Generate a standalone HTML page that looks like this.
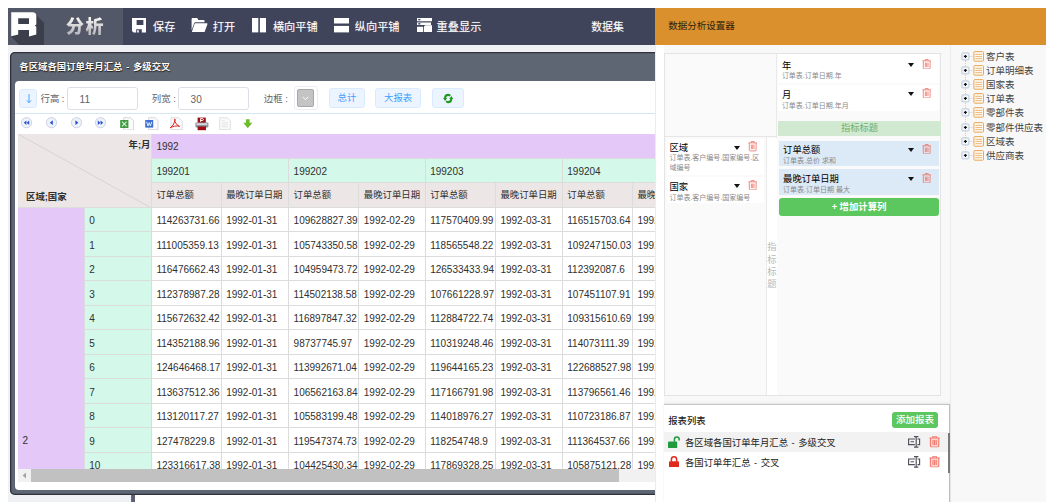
<!DOCTYPE html>
<html lang="zh-CN">
<head>
<meta charset="utf-8">
<title>分析</title>
<style>
html,body{margin:0;padding:0;background:#fff;}
body{width:1054px;height:502px;position:relative;overflow:hidden;font-family:"Liberation Sans","Noto Sans CJK SC",sans-serif;font-size:9.4px;color:#222;}
.abs{position:absolute;}
#bg{left:8px;top:8px;width:1038px;height:494px;background:#f0f1f5;}
/* top bar */
#logo{left:8px;top:8px;width:114.8px;height:36.7px;background:#535868;overflow:hidden;}
#tbar{left:122.8px;top:8px;width:532.8px;height:36.7px;background:#40445a;}
.ti{position:absolute;top:0;height:36.7px;line-height:38px;color:#fff;font-size:11.2px;white-space:nowrap;text-shadow:0 0 1px rgba(255,255,255,.35);}
.ti svg{position:absolute;}
#fx{left:58px;top:5.6px;font-size:18px;font-weight:900;line-height:23px;letter-spacing:1.5px;font-family:"Noto Sans CJK SC","Liberation Sans",sans-serif;color:#d4d4d4;background:linear-gradient(#f4f4f4 20%,#b9bcc4 80%);-webkit-background-clip:text;background-clip:text;-webkit-text-fill-color:transparent;filter:drop-shadow(0.6px 0.8px 0 rgba(150,120,110,.8));}
/* window */
#win2{left:132px;top:300px;width:640px;height:260px;background:#fff;border:3.6px solid #5b6170;box-sizing:border-box;border-radius:5px;box-shadow:0 0 0 .7px #2c2f3a;}
#win{left:10px;top:51.8px;width:700px;height:443px;background:#5f6673;border-radius:5px;box-shadow:inset 0 0 0 1.3px #2f323c;overflow:hidden;}
#wtitle{left:9.3px;top:7.1px;font-size:9.4px;font-weight:700;color:#fff;line-height:15px;white-space:nowrap;text-shadow:0 0 1px rgba(20,20,20,.9),0.5px 0.5px 1px #222;font-family:"Noto Sans CJK SC","Liberation Sans",sans-serif;letter-spacing:0;word-spacing:1.4px;}
#wbody{left:5px;top:29.2px;width:700px;height:409.2px;background:#fff;border-radius:4px 0 0 4px;overflow:hidden;}
#wb2{left:-.8px;top:0;width:700px;height:409.2px;}
/* controls inside window body; coords relative to wbody (page x-14.2, page y-81) */
.lbl{position:absolute;font-size:9.4px;color:#606266;line-height:14px;white-space:nowrap;top:11.2px;}
.inp{position:absolute;top:6.4px;height:22.6px;box-sizing:border-box;border:1px solid #dcdfe6;border-radius:3px;background:#fff;font-size:10px;color:#606266;line-height:23.4px;padding-left:11.2px;overflow:hidden;}
.btn{position:absolute;top:7px;height:20.3px;box-sizing:border-box;border:1px solid #d9ecff;background:#ecf5ff;border-radius:3px;color:#409eff;font-size:9.4px;line-height:18.3px;text-align:center;white-space:nowrap;}
#sep{left:0;top:32px;width:700px;height:1px;background:#d3e8f3;}
.ic{position:absolute;top:36px;}
/* table */
#tbl{left:3.8px;top:52.6px;width:690px;height:335.2px;overflow:hidden;font-size:10px;color:#303030;}
.c{position:absolute;box-sizing:border-box;border-right:1px solid #dcdcdc;border-bottom:1px solid #dcdcdc;padding-left:4.6px;white-space:nowrap;overflow:hidden;background:#fff;}
.c.hd{background:#ece6e6;}
.c.pu{background:#e4c8f7;}
.c.gr{background:#d4f9ea;}
.c.zh{font-size:9.4px;}
.c.n{padding-top:1.3px;}
.corner{padding:0;font-weight:bold;font-size:9.4px;}
.corner span{position:absolute;line-height:12px;}
.corner .ym{right:0.4px;top:5.5px;}
.corner .rc{left:8px;top:57px;}
/* scrollbar */
#sb{left:3.8px;top:387.8px;width:700px;height:13.4px;background:#f1f1f1;}
#sbt{left:13.2px;top:0;width:588px;height:13.4px;background:#c1c1c1;}
/* right panel */
#panel{left:655px;top:8px;width:391px;height:494px;background:#f8f8f8;overflow:hidden;}
#pin{left:.6px;top:0;width:390.4px;height:494px;}
#phead{left:-1px;top:0;width:391.4px;height:36.7px;background:#d9902d;color:#2b2210;font-size:9.5px;line-height:36.5px;}
#pwhite{left:-.6px;top:36.7px;width:9px;height:460px;background:#fff;box-sizing:border-box;border-left:1px solid #ececec;}
#box{left:8.9px;top:45px;width:277px;height:342.6px;box-sizing:border-box;border:1px solid #e4e4e4;background:#fafafa;}
.vl{position:absolute;width:1px;background:#eaeaea;}
.hl{position:absolute;height:1px;background:#e6e6e6;}
.it{position:absolute;background:#fff;box-sizing:border-box;}
.it b{position:absolute;left:3.6px;top:3.4px;font-size:9.3px;line-height:12px;font-weight:400;color:#000;white-space:nowrap;font-family:"Noto Sans CJK SC","Liberation Sans",sans-serif;}
.it i{position:absolute;left:3.6px;font-style:normal;font-size:7px;line-height:9.4px;color:#8a8a8a;}
.it.bl{background:#dce9f7;}
.tri{position:absolute;width:0;height:0;border-left:3.3px solid transparent;border-right:3.3px solid transparent;border-top:4.2px solid #111;}
.trash{position:absolute;}
.gbtn{position:absolute;background:#5cc75f;color:#fff;border-radius:3px;text-align:center;font-weight:bold;white-space:nowrap;font-family:"Noto Sans CJK SC","Liberation Sans",sans-serif;}
/* tree */
.tr{position:absolute;left:305px;height:14px;white-space:nowrap;font-size:9.5px;line-height:14px;color:#444;font-weight:400;font-family:'Noto Sans CJK SC','Liberation Sans',sans-serif;}
.tr svg{position:absolute;top:1px;left:0;}
.tr span{position:absolute;left:25.4px;top:-0.9px;}
/* report list */
#rl{left:8.4px;top:396.4px;width:286.2px;height:100px;background:#fff;border-top:1px solid #c4c4c4;border-right:1px solid #bdbdbd;box-sizing:border-box;box-shadow:0 -1px 2px rgba(0,0,0,.08);}
.rrow{position:absolute;left:0;width:284.5px;height:19.6px;font-size:9.4px;line-height:21.2px;color:#222;white-space:nowrap;word-spacing:.9px;}
.rrow span{position:absolute;left:20.9px;top:0;}
</style>
</head>
<body>
<div id="bg" class="abs"></div>

<!-- logo section -->
<div id="logo" class="abs">
  <svg class="abs" style="left:0;top:0" width="115" height="37" viewBox="0 0 115 37">
    <polygon points="28.3,7 36,14.7 36,37 11.2,37 3.2,28.6 3.2,6" fill="#3b3f4b"/>
    <path fill="#fff" fill-rule="evenodd" d="M3.2 4.2 H24.6 Q28.3 4.2 28.3 7.8 V16.4 L26.8 17.6 L28.3 18.8 V26.6 L21 28.6 V22 H10.2 V26.4 L3.2 28.3 Z M10.2 10.2 V16 H21 V10.2 Z"/>
  </svg>
  <div id="fx" class="abs">分析</div>
</div>

<!-- toolbar -->
<div id="tbar" class="abs">
  <div class="ti" style="left:9.3px;width:60px">
    <svg style="left:0;top:10px" width="14.4" height="14.6" viewBox="0 0 14.4 14.6"><path fill="#fff" fill-rule="evenodd" d="M0 0H14.4V14.6H9.8V11.2H4.2V14.6H1.6L0 13Z M4.6 2V7H11.4V2Z M5.2 12.2H6.8V14.6H5.2Z"/></svg>
    <span style="position:absolute;left:21px">保存</span>
  </div>
  <div class="ti" style="left:68.4px;width:60px">
    <svg style="left:0;top:10.2px" width="16.6" height="14.2" viewBox="0 0 16.6 14.2"><path fill="#fff" d="M0.6 1.2Q0.6 0 1.8 0H5.6Q6.6 0 6.9 1L7.2 1.9H12.4Q13.6 1.9 13.6 3.1V4.3H4.6Q3.4 4.3 3 5.4L0.6 12.2Z"/><path fill="#fff" d="M4.3 5.3H16Q16.8 5.3 16.5 6.1L13.9 13.3Q13.6 14.2 12.6 14.2H1.4Q0.7 14.2 1 13.4L3.4 6.2Q3.7 5.3 4.3 5.3Z"/></svg>
    <span style="position:absolute;left:21.6px">打开</span>
  </div>
  <div class="ti" style="left:129.5px;width:80px">
    <svg style="left:0;top:10.3px" width="14.2" height="14.4" viewBox="0 0 14.2 14.4"><rect x="0" y="0" width="6.3" height="14.4" fill="#fff"/><rect x="7.9" y="0" width="6.3" height="14.4" fill="#fff"/></svg>
    <span style="position:absolute;left:20.6px">横向平铺</span>
  </div>
  <div class="ti" style="left:211px;width:80px">
    <svg style="left:0;top:10.3px" width="15" height="14.4" viewBox="0 0 15 14.4"><rect x="0" y="0" width="15" height="5.5" fill="#fff"/><rect x="0" y="7.9" width="15" height="6.5" fill="#fff"/></svg>
    <span style="position:absolute;left:21px">纵向平铺</span>
  </div>
  <div class="ti" style="left:293.6px;width:80px">
    <svg style="left:.5px;top:10px" width="15.4" height="14" viewBox="0 0 15.4 14"><path fill="#fff" d="M0 0H15.4V3.2H0Z M0 4.5H14V7.1H0Z M0 8.8H6V14H0Z M6.8 14V9.4Q6.8 7.3 9 7.3H15.4V14Z"/><rect x="1.3" y="0.9" width="2.1" height="1.4" fill="#40445a"/><rect x="1.3" y="5.1" width="2.1" height="1.4" fill="#40445a"/></svg>
    <span style="position:absolute;left:20.2px">重叠显示</span>
  </div>
  <div class="ti" style="left:468.4px;font-size:10.9px">数据集</div>
</div>

<!-- second window peeking below -->
<div id="win2" class="abs"></div>

<!-- main window -->
<div id="win" class="abs">
  <div id="wtitle" class="abs">各区域各国订单年月汇总 - 多级交叉</div>
  <div id="wbody" class="abs"><div id="wb2" class="abs">
    <!-- toolbar row -->
    <div class="btn" style="left:4.8px;top:8.3px;width:18.2px;height:18.6px;line-height:15px;"><svg width="6" height="10" viewBox="0 0 6 10" style="position:absolute;left:5.6px;top:3.8px"><path d="M3 0V8.6M0.9 6.4L3 8.8L5.1 6.4" stroke="#409eff" stroke-width="0.9" fill="none"/></svg></div>
    <div class="lbl" style="left:26.3px">行高 :</div>
    <div class="inp" style="left:53.2px;width:70.4px">11</div>
    <div class="lbl" style="left:137.6px">列宽 :</div>
    <div class="inp" style="left:164.2px;width:70.8px">30</div>
    <div class="lbl" style="left:249.6px">边框 :</div>
    <div class="abs" style="left:279.4px;top:4.8px;width:24.4px;height:24.6px;box-sizing:border-box;border:1px solid #ebeef5;border-radius:3px;background:#fff;"></div>
    <div class="abs" style="left:282.8px;top:8.4px;width:17.4px;height:17.2px;box-sizing:border-box;border:1px solid #a8a8a8;border-radius:2px;background:#c4c4c4;"><svg width="7" height="5" viewBox="0 0 7 5" style="position:absolute;left:4.2px;top:5.6px"><path d="M0.8 1L3.5 3.6L6.2 1" stroke="#fff" stroke-width="1" fill="none"/></svg></div>
    <div class="btn" style="left:314.7px;width:36.2px">总计</div>
    <div class="btn" style="left:360.8px;width:46.2px">大报表</div>
    <div class="btn" style="left:417.8px;width:31.8px"><svg width="10.4" height="13" viewBox="0 0 10 11.4" preserveAspectRatio="none" style="position:absolute;left:10px;top:2.6px"><path fill="#1e9b1e" d="M5 1.6A4 4 0 0 0 1 5.3H0L2 8L4 5.3H2.9A2.3 2.3 0 0 1 5 3.4A2.2 2.2 0 0 1 6.5 4L7.6 2.6A4 4 0 0 0 5 1.6Z M5 9.8A4 4 0 0 0 9 6.1H10L8 3.4L6 6.1H7.1A2.3 2.3 0 0 1 5 8A2.2 2.2 0 0 1 3.5 7.4L2.4 8.8A4 4 0 0 0 5 9.8Z"/></svg></div>
    <div id="sep" class="abs"></div>
    <!-- icon row -->
    <svg class="ic" style="left:6.8px" width="11" height="12" viewBox="0 0 11 12"><circle cx="5.5" cy="5.7" r="5.1" fill="#eef2fb" stroke="#c3c7dc" stroke-width=".8"/><path d="M5.4 3.5L2.8 5.7L5.4 7.9Z M8.2 3.5L5.6 5.7L8.2 7.9Z" fill="#2a4fd0"/></svg>
    <svg class="ic" style="left:31.5px" width="11" height="12" viewBox="0 0 11 12"><circle cx="5.5" cy="5.7" r="5.1" fill="#eef2fb" stroke="#c3c7dc" stroke-width=".8"/><path d="M6.8 3.3L3.8 5.7L6.8 8.1Z" fill="#2a4fd0"/></svg>
    <svg class="ic" style="left:56.3px" width="11" height="12" viewBox="0 0 11 12"><circle cx="5.5" cy="5.7" r="5.1" fill="#eef2fb" stroke="#c3c7dc" stroke-width=".8"/><path d="M4.4 3.3L7.4 5.7L4.4 8.1Z" fill="#2a4fd0"/></svg>
    <svg class="ic" style="left:81.2px" width="11" height="12" viewBox="0 0 11 12"><circle cx="5.5" cy="5.7" r="5.1" fill="#eef2fb" stroke="#c3c7dc" stroke-width=".8"/><path d="M2.8 3.5L5.4 5.7L2.8 7.9Z M5.6 3.5L8.2 5.7L5.6 7.9Z" fill="#2a4fd0"/></svg>
    <!-- excel -->
    <svg class="ic" style="left:105.4px" width="14" height="13.4" viewBox="0 0 14 13.4"><path d="M3.6 0.7H10.6L13.5 3.6V13H3.6Z" fill="#fbfbfb" stroke="#c9c9c9" stroke-width=".7"/><rect x="0.2" y="3" width="8.2" height="8" fill="#3f9a3f"/><path d="M2 4.6L6.6 9.4M6.6 4.6L2 9.4" stroke="#d8f0d8" stroke-width="1.1"/></svg>
    <!-- word -->
    <svg class="ic" style="left:130.8px" width="14" height="13.4" viewBox="0 0 14 13.4"><path d="M3.6 0.7H10.2L13 3.6V12.6H3.6Z" fill="#fbfbfb" stroke="#c9c9d4" stroke-width=".7"/><rect x="0.2" y="3" width="8" height="7.6" fill="#3f6fd0"/><path d="M1.6 4.8L3 9L4.2 5.6L5.4 9L6.8 4.8" stroke="#dfe8fb" stroke-width="1" fill="none"/></svg>
    <!-- pdf -->
    <svg class="ic" style="left:156.2px" width="13" height="13.4" viewBox="0 0 13 13.4"><path d="M1 0.7H8.6L12.2 4.2V12.6H1Z" fill="#fbfbfb" stroke="#cfcfd6" stroke-width=".7"/><path d="M0.2 10.8Q3.6 9 5.2 3.2Q5.4 2 4.8 2Q4.2 2.4 4.8 4.4Q6 8 9.6 9.4Q8 8.6 4.4 9.2Q2 9.8 0.2 10.8Z" fill="none" stroke="#e02424" stroke-width="1"/></svg>
    <!-- print -->
    <svg class="ic" style="left:180.6px" width="14" height="13.6" viewBox="0 0 14 13.6"><rect x="2.6" y="0.6" width="8.2" height="5.4" fill="#9c0f14"/><rect x="0.4" y="5.4" width="13" height="5" rx="1" fill="#8f949e"/><rect x="1.6" y="6.4" width="10.6" height="1.4" fill="#e8e8ee"/><rect x="2.6" y="9.4" width="8.4" height="3.8" fill="#9c0f14"/><path d="M5.6 4.8V1.6H7.4Q8.4 1.6 8.4 2.6Q8.4 3.5 7.4 3.5H5.8" fill="none" stroke="#fff" stroke-width="1"/></svg>
    <!-- page gray -->
    <svg class="ic" style="left:205px" width="12" height="13.4" viewBox="0 0 12 13.4"><path d="M0.6 0.7H8L11.4 4V12.6H0.6Z" fill="#fafafa" stroke="#d6d6d6" stroke-width=".7"/><path d="M2.6 3.6H6 M2.6 5.8H9 M2.6 7.8H9 M2.6 9.8H9" stroke="#e0e0e0" stroke-width=".8"/></svg>
    <!-- green arrow -->
    <svg class="ic" style="left:228.8px;top:37.6px" width="9.6" height="9.6" viewBox="0 0 9.6 9.6"><path d="M3 0.2H6.6V3.8H9.4L4.8 9.2L0.2 3.8H3Z" fill="#6cbc2c"/></svg>

    <!-- table -->
    <div id="tbl" class="abs">
<div class="c hd corner" style="left:0;top:0;width:133.8px;height:74.2px"><svg width="133.8" height="74.2" style="position:absolute;left:0;top:0"><line x1="0" y1="0" x2="133.8" y2="74.2" stroke="#d9d3d3" stroke-width="1"/></svg><span class="ym">年;月</span><span class="rc">区域;国家</span></div>
<div class="c pu n" style="left:133.8px;top:0.0px;width:548.1px;height:25.1px;line-height:24.1px">1992</div>
<div class="c gr n" style="left:133.8px;top:25.1px;width:137.2px;height:24.3px;line-height:23.3px">199201</div>
<div class="c hd zh" style="left:133.8px;top:49.4px;width:69.8px;height:24.8px;line-height:23.8px">订单总额</div>
<div class="c hd zh" style="left:203.6px;top:49.4px;width:67.4px;height:24.8px;line-height:23.8px">最晚订单日期</div>
<div class="c gr n" style="left:271.0px;top:25.1px;width:136.6px;height:24.3px;line-height:23.3px">199202</div>
<div class="c hd zh" style="left:271.0px;top:49.4px;width:70.2px;height:24.8px;line-height:23.8px">订单总额</div>
<div class="c hd zh" style="left:341.2px;top:49.4px;width:66.4px;height:24.8px;line-height:23.8px">最晚订单日期</div>
<div class="c gr n" style="left:407.6px;top:25.1px;width:137.1px;height:24.3px;line-height:23.3px">199203</div>
<div class="c hd zh" style="left:407.6px;top:49.4px;width:70.2px;height:24.8px;line-height:23.8px">订单总额</div>
<div class="c hd zh" style="left:477.8px;top:49.4px;width:66.9px;height:24.8px;line-height:23.8px">最晚订单日期</div>
<div class="c gr n" style="left:544.7px;top:25.1px;width:137.2px;height:24.3px;line-height:23.3px">199204</div>
<div class="c hd zh" style="left:544.7px;top:49.4px;width:70.2px;height:24.8px;line-height:23.8px">订单总额</div>
<div class="c hd zh" style="left:614.9px;top:49.4px;width:67.0px;height:24.8px;line-height:23.8px">最晚订单日期</div>
<div class="c pu n" style="left:0;top:74.2px;width:66.6px;height:465.5px;line-height:464.5px">2</div>
<div class="c gr n" style="left:66.6px;top:74.2px;width:67.2px;height:24.5px;line-height:23.5px">0</div>
<div class="c d n" style="left:133.8px;top:74.2px;width:69.8px;height:24.5px;line-height:23.5px">114263731.66</div>
<div class="c d n" style="left:203.6px;top:74.2px;width:67.4px;height:24.5px;line-height:23.5px">1992-01-31</div>
<div class="c d n" style="left:271.0px;top:74.2px;width:70.2px;height:24.5px;line-height:23.5px">109628827.39</div>
<div class="c d n" style="left:341.2px;top:74.2px;width:66.4px;height:24.5px;line-height:23.5px">1992-02-29</div>
<div class="c d n" style="left:407.6px;top:74.2px;width:70.2px;height:24.5px;line-height:23.5px">117570409.99</div>
<div class="c d n" style="left:477.8px;top:74.2px;width:66.9px;height:24.5px;line-height:23.5px">1992-03-31</div>
<div class="c d n" style="left:544.7px;top:74.2px;width:70.2px;height:24.5px;line-height:23.5px">116515703.64</div>
<div class="c d n" style="left:614.9px;top:74.2px;width:67.0px;height:24.5px;line-height:23.5px">1992-04-30</div>
<div class="c gr n" style="left:66.6px;top:98.7px;width:67.2px;height:24.5px;line-height:23.5px">1</div>
<div class="c d n" style="left:133.8px;top:98.7px;width:69.8px;height:24.5px;line-height:23.5px">111005359.13</div>
<div class="c d n" style="left:203.6px;top:98.7px;width:67.4px;height:24.5px;line-height:23.5px">1992-01-31</div>
<div class="c d n" style="left:271.0px;top:98.7px;width:70.2px;height:24.5px;line-height:23.5px">105743350.58</div>
<div class="c d n" style="left:341.2px;top:98.7px;width:66.4px;height:24.5px;line-height:23.5px">1992-02-29</div>
<div class="c d n" style="left:407.6px;top:98.7px;width:70.2px;height:24.5px;line-height:23.5px">118565548.22</div>
<div class="c d n" style="left:477.8px;top:98.7px;width:66.9px;height:24.5px;line-height:23.5px">1992-03-31</div>
<div class="c d n" style="left:544.7px;top:98.7px;width:70.2px;height:24.5px;line-height:23.5px">109247150.03</div>
<div class="c d n" style="left:614.9px;top:98.7px;width:67.0px;height:24.5px;line-height:23.5px">1992-04-30</div>
<div class="c gr n" style="left:66.6px;top:123.2px;width:67.2px;height:24.5px;line-height:23.5px">2</div>
<div class="c d n" style="left:133.8px;top:123.2px;width:69.8px;height:24.5px;line-height:23.5px">116476662.43</div>
<div class="c d n" style="left:203.6px;top:123.2px;width:67.4px;height:24.5px;line-height:23.5px">1992-01-31</div>
<div class="c d n" style="left:271.0px;top:123.2px;width:70.2px;height:24.5px;line-height:23.5px">104959473.72</div>
<div class="c d n" style="left:341.2px;top:123.2px;width:66.4px;height:24.5px;line-height:23.5px">1992-02-29</div>
<div class="c d n" style="left:407.6px;top:123.2px;width:70.2px;height:24.5px;line-height:23.5px">126533433.94</div>
<div class="c d n" style="left:477.8px;top:123.2px;width:66.9px;height:24.5px;line-height:23.5px">1992-03-31</div>
<div class="c d n" style="left:544.7px;top:123.2px;width:70.2px;height:24.5px;line-height:23.5px">112392087.6</div>
<div class="c d n" style="left:614.9px;top:123.2px;width:67.0px;height:24.5px;line-height:23.5px">1992-04-30</div>
<div class="c gr n" style="left:66.6px;top:147.7px;width:67.2px;height:24.5px;line-height:23.5px">3</div>
<div class="c d n" style="left:133.8px;top:147.7px;width:69.8px;height:24.5px;line-height:23.5px">112378987.28</div>
<div class="c d n" style="left:203.6px;top:147.7px;width:67.4px;height:24.5px;line-height:23.5px">1992-01-31</div>
<div class="c d n" style="left:271.0px;top:147.7px;width:70.2px;height:24.5px;line-height:23.5px">114502138.58</div>
<div class="c d n" style="left:341.2px;top:147.7px;width:66.4px;height:24.5px;line-height:23.5px">1992-02-29</div>
<div class="c d n" style="left:407.6px;top:147.7px;width:70.2px;height:24.5px;line-height:23.5px">107661228.97</div>
<div class="c d n" style="left:477.8px;top:147.7px;width:66.9px;height:24.5px;line-height:23.5px">1992-03-31</div>
<div class="c d n" style="left:544.7px;top:147.7px;width:70.2px;height:24.5px;line-height:23.5px">107451107.91</div>
<div class="c d n" style="left:614.9px;top:147.7px;width:67.0px;height:24.5px;line-height:23.5px">1992-04-30</div>
<div class="c gr n" style="left:66.6px;top:172.2px;width:67.2px;height:24.5px;line-height:23.5px">4</div>
<div class="c d n" style="left:133.8px;top:172.2px;width:69.8px;height:24.5px;line-height:23.5px">115672632.42</div>
<div class="c d n" style="left:203.6px;top:172.2px;width:67.4px;height:24.5px;line-height:23.5px">1992-01-31</div>
<div class="c d n" style="left:271.0px;top:172.2px;width:70.2px;height:24.5px;line-height:23.5px">116897847.32</div>
<div class="c d n" style="left:341.2px;top:172.2px;width:66.4px;height:24.5px;line-height:23.5px">1992-02-29</div>
<div class="c d n" style="left:407.6px;top:172.2px;width:70.2px;height:24.5px;line-height:23.5px">112884722.74</div>
<div class="c d n" style="left:477.8px;top:172.2px;width:66.9px;height:24.5px;line-height:23.5px">1992-03-31</div>
<div class="c d n" style="left:544.7px;top:172.2px;width:70.2px;height:24.5px;line-height:23.5px">109315610.69</div>
<div class="c d n" style="left:614.9px;top:172.2px;width:67.0px;height:24.5px;line-height:23.5px">1992-04-30</div>
<div class="c gr n" style="left:66.6px;top:196.7px;width:67.2px;height:24.5px;line-height:23.5px">5</div>
<div class="c d n" style="left:133.8px;top:196.7px;width:69.8px;height:24.5px;line-height:23.5px">114352188.96</div>
<div class="c d n" style="left:203.6px;top:196.7px;width:67.4px;height:24.5px;line-height:23.5px">1992-01-31</div>
<div class="c d n" style="left:271.0px;top:196.7px;width:70.2px;height:24.5px;line-height:23.5px">98737745.97</div>
<div class="c d n" style="left:341.2px;top:196.7px;width:66.4px;height:24.5px;line-height:23.5px">1992-02-29</div>
<div class="c d n" style="left:407.6px;top:196.7px;width:70.2px;height:24.5px;line-height:23.5px">110319248.46</div>
<div class="c d n" style="left:477.8px;top:196.7px;width:66.9px;height:24.5px;line-height:23.5px">1992-03-31</div>
<div class="c d n" style="left:544.7px;top:196.7px;width:70.2px;height:24.5px;line-height:23.5px">114073111.39</div>
<div class="c d n" style="left:614.9px;top:196.7px;width:67.0px;height:24.5px;line-height:23.5px">1992-04-30</div>
<div class="c gr n" style="left:66.6px;top:221.2px;width:67.2px;height:24.5px;line-height:23.5px">6</div>
<div class="c d n" style="left:133.8px;top:221.2px;width:69.8px;height:24.5px;line-height:23.5px">124646468.17</div>
<div class="c d n" style="left:203.6px;top:221.2px;width:67.4px;height:24.5px;line-height:23.5px">1992-01-31</div>
<div class="c d n" style="left:271.0px;top:221.2px;width:70.2px;height:24.5px;line-height:23.5px">113992671.04</div>
<div class="c d n" style="left:341.2px;top:221.2px;width:66.4px;height:24.5px;line-height:23.5px">1992-02-29</div>
<div class="c d n" style="left:407.6px;top:221.2px;width:70.2px;height:24.5px;line-height:23.5px">119644165.23</div>
<div class="c d n" style="left:477.8px;top:221.2px;width:66.9px;height:24.5px;line-height:23.5px">1992-03-31</div>
<div class="c d n" style="left:544.7px;top:221.2px;width:70.2px;height:24.5px;line-height:23.5px">122688527.98</div>
<div class="c d n" style="left:614.9px;top:221.2px;width:67.0px;height:24.5px;line-height:23.5px">1992-04-30</div>
<div class="c gr n" style="left:66.6px;top:245.7px;width:67.2px;height:24.5px;line-height:23.5px">7</div>
<div class="c d n" style="left:133.8px;top:245.7px;width:69.8px;height:24.5px;line-height:23.5px">113637512.36</div>
<div class="c d n" style="left:203.6px;top:245.7px;width:67.4px;height:24.5px;line-height:23.5px">1992-01-31</div>
<div class="c d n" style="left:271.0px;top:245.7px;width:70.2px;height:24.5px;line-height:23.5px">106562163.84</div>
<div class="c d n" style="left:341.2px;top:245.7px;width:66.4px;height:24.5px;line-height:23.5px">1992-02-29</div>
<div class="c d n" style="left:407.6px;top:245.7px;width:70.2px;height:24.5px;line-height:23.5px">117166791.98</div>
<div class="c d n" style="left:477.8px;top:245.7px;width:66.9px;height:24.5px;line-height:23.5px">1992-03-31</div>
<div class="c d n" style="left:544.7px;top:245.7px;width:70.2px;height:24.5px;line-height:23.5px">113796561.46</div>
<div class="c d n" style="left:614.9px;top:245.7px;width:67.0px;height:24.5px;line-height:23.5px">1992-04-30</div>
<div class="c gr n" style="left:66.6px;top:270.2px;width:67.2px;height:24.5px;line-height:23.5px">8</div>
<div class="c d n" style="left:133.8px;top:270.2px;width:69.8px;height:24.5px;line-height:23.5px">113120117.27</div>
<div class="c d n" style="left:203.6px;top:270.2px;width:67.4px;height:24.5px;line-height:23.5px">1992-01-31</div>
<div class="c d n" style="left:271.0px;top:270.2px;width:70.2px;height:24.5px;line-height:23.5px">105583199.48</div>
<div class="c d n" style="left:341.2px;top:270.2px;width:66.4px;height:24.5px;line-height:23.5px">1992-02-29</div>
<div class="c d n" style="left:407.6px;top:270.2px;width:70.2px;height:24.5px;line-height:23.5px">114018976.27</div>
<div class="c d n" style="left:477.8px;top:270.2px;width:66.9px;height:24.5px;line-height:23.5px">1992-03-31</div>
<div class="c d n" style="left:544.7px;top:270.2px;width:70.2px;height:24.5px;line-height:23.5px">110723186.87</div>
<div class="c d n" style="left:614.9px;top:270.2px;width:67.0px;height:24.5px;line-height:23.5px">1992-04-30</div>
<div class="c gr n" style="left:66.6px;top:294.7px;width:67.2px;height:24.5px;line-height:23.5px">9</div>
<div class="c d n" style="left:133.8px;top:294.7px;width:69.8px;height:24.5px;line-height:23.5px">127478229.8</div>
<div class="c d n" style="left:203.6px;top:294.7px;width:67.4px;height:24.5px;line-height:23.5px">1992-01-31</div>
<div class="c d n" style="left:271.0px;top:294.7px;width:70.2px;height:24.5px;line-height:23.5px">119547374.73</div>
<div class="c d n" style="left:341.2px;top:294.7px;width:66.4px;height:24.5px;line-height:23.5px">1992-02-29</div>
<div class="c d n" style="left:407.6px;top:294.7px;width:70.2px;height:24.5px;line-height:23.5px">118254748.9</div>
<div class="c d n" style="left:477.8px;top:294.7px;width:66.9px;height:24.5px;line-height:23.5px">1992-03-31</div>
<div class="c d n" style="left:544.7px;top:294.7px;width:70.2px;height:24.5px;line-height:23.5px">111364537.66</div>
<div class="c d n" style="left:614.9px;top:294.7px;width:67.0px;height:24.5px;line-height:23.5px">1992-04-30</div>
<div class="c gr n" style="left:66.6px;top:319.2px;width:67.2px;height:24.5px;line-height:23.5px">10</div>
<div class="c d n" style="left:133.8px;top:319.2px;width:69.8px;height:24.5px;line-height:23.5px">123316617.38</div>
<div class="c d n" style="left:203.6px;top:319.2px;width:67.4px;height:24.5px;line-height:23.5px">1992-01-31</div>
<div class="c d n" style="left:271.0px;top:319.2px;width:70.2px;height:24.5px;line-height:23.5px">104425430.34</div>
<div class="c d n" style="left:341.2px;top:319.2px;width:66.4px;height:24.5px;line-height:23.5px">1992-02-29</div>
<div class="c d n" style="left:407.6px;top:319.2px;width:70.2px;height:24.5px;line-height:23.5px">117869328.25</div>
<div class="c d n" style="left:477.8px;top:319.2px;width:66.9px;height:24.5px;line-height:23.5px">1992-03-31</div>
<div class="c d n" style="left:544.7px;top:319.2px;width:70.2px;height:24.5px;line-height:23.5px">105875121.28</div>
<div class="c d n" style="left:614.9px;top:319.2px;width:67.0px;height:24.5px;line-height:23.5px">1992-04-30</div>
    </div>
    <!-- h scrollbar -->
    <div id="sb" class="abs">
      <svg class="abs" style="left:3.6px;top:3px" width="5" height="7" viewBox="0 0 5 7"><path d="M4 0.4L0.6 3.5L4 6.6Z" fill="#a3a3a3"/></svg>
      <div id="sbt" class="abs"></div>
    </div>
  </div></div>
</div>

<!-- right panel -->
<div id="panel" class="abs"><div id="pin" class="abs">
  <div id="phead" class="abs"><span style="position:absolute;left:13.7px">数据分析设置器</span></div>
  <div id="pwhite" class="abs"></div>
  <!-- tree panel -->
  <div class="vl" style="left:294.6px;top:37px;height:460px;background:#ececec"></div>
  <div id="box" class="abs"></div>
  <div class="vl" style="left:110.2px;top:128.6px;height:258px"></div>
  <div class="vl" style="left:120.8px;top:46px;height:340.6px"></div>
  <div class="hl" style="left:9.9px;top:128px;width:111.4px"></div>
  <div class="abs" style="left:111.6px;top:129.6px;width:9.6px;height:257px;background:#fff"></div>
  <!-- top right items -->
  <div class="it" style="left:122.7px;top:46px;width:160.4px;height:28.6px"><b style="top:5px">年</b><i style="top:17.1px">订单表.订单日期.年</i></div>
  <div class="it" style="left:122.7px;top:76.8px;width:160.4px;height:26px"><b style="top:3px">月</b><i style="top:15.9px">订单表.订单日期.年月</i></div>
  <div class="tri" style="left:252.2px;top:54.8px"></div>
  <div class="tri" style="left:252.2px;top:83.8px"></div>
  <svg class="trash" style="left:266.6px;top:50.6px" width="9.4" height="10.4" viewBox="0 0 9.6 11"><path d="M0.3 2H9.3 M3.2 2V0.6H6.4V2 M1.2 2V9.6Q1.2 10.5 2.1 10.5H7.5Q8.4 10.5 8.4 9.6V2 M3.4 3.8V8.6 M4.8 3.8V8.6 M6.2 3.8V8.6" fill="none" stroke="#f0776b" stroke-width=".9"/></svg>
  <svg class="trash" style="left:266.6px;top:79.6px" width="9.4" height="10.4" viewBox="0 0 9.6 11"><path d="M0.3 2H9.3 M3.2 2V0.6H6.4V2 M1.2 2V9.6Q1.2 10.5 2.1 10.5H7.5Q8.4 10.5 8.4 9.6V2 M3.4 3.8V8.6 M4.8 3.8V8.6 M6.2 3.8V8.6" fill="none" stroke="#f0776b" stroke-width=".9"/></svg>
  <!-- green title bar -->
  <div class="abs" style="left:122.2px;top:112.6px;width:163.6px;height:15.2px;background:#d0e9d0;color:#6fae6f;font-size:9.3px;line-height:15px;text-align:center">指标标题</div>
  <!-- left items -->
  <div class="it" style="left:11px;top:131px;width:97.6px;height:35.8px"><b style="top:2.2px;left:2.8px">区域</b><i style="top:14.4px;left:2.8px;width:92px">订单表.客户编号.国家编号.区域编号</i></div>
  <div class="it" style="left:11px;top:169.4px;width:97.6px;height:26px"><b style="top:2.2px;left:2.8px">国家</b><i style="top:15.5px;left:2.8px;width:92px">订单表.客户编号.国家编号</i></div>
  <div class="tri" style="left:78.4px;top:137.8px"></div>
  <div class="tri" style="left:78.4px;top:176.2px"></div>
  <svg class="trash" style="left:92.4px;top:133.2px" width="9.4" height="10.4" viewBox="0 0 9.6 11"><path d="M0.3 2H9.3 M3.2 2V0.6H6.4V2 M1.2 2V9.6Q1.2 10.5 2.1 10.5H7.5Q8.4 10.5 8.4 9.6V2 M3.4 3.8V8.6 M4.8 3.8V8.6 M6.2 3.8V8.6" fill="none" stroke="#f0776b" stroke-width=".9"/></svg>
  <svg class="trash" style="left:92.4px;top:171.6px" width="9.4" height="10.4" viewBox="0 0 9.6 11"><path d="M0.3 2H9.3 M3.2 2V0.6H6.4V2 M1.2 2V9.6Q1.2 10.5 2.1 10.5H7.5Q8.4 10.5 8.4 9.6V2 M3.4 3.8V8.6 M4.8 3.8V8.6 M6.2 3.8V8.6" fill="none" stroke="#f0776b" stroke-width=".9"/></svg>
  <!-- vertical label -->
  <div class="abs" style="left:111.4px;top:233.2px;width:9.6px;font-size:9.3px;line-height:12.4px;color:#b9b9b9;text-align:center">指<br>标<br>标<br>题</div>
  <!-- blue items -->
  <div class="it bl" style="left:123.9px;top:133px;width:159.4px;height:25.4px"><b style="top:2.4px">订单总额</b><i style="top:15.1px">订单表.总价 求和</i></div>
  <div class="it bl" style="left:123.9px;top:160.8px;width:159.4px;height:26.6px"><b style="top:3.4px">最晚订单日期</b><i style="top:16.7px">订单表.订单日期 最大</i></div>
  <div class="tri" style="left:252.2px;top:139.8px"></div>
  <div class="tri" style="left:252.2px;top:168.8px"></div>
  <svg class="trash" style="left:266.6px;top:135.6px" width="9.4" height="10.4" viewBox="0 0 9.6 11"><path d="M0.3 2H9.3 M3.2 2V0.6H6.4V2 M1.2 2V9.6Q1.2 10.5 2.1 10.5H7.5Q8.4 10.5 8.4 9.6V2 M3.4 3.8V8.6 M4.8 3.8V8.6 M6.2 3.8V8.6" fill="none" stroke="#f0776b" stroke-width=".9"/></svg>
  <svg class="trash" style="left:266.6px;top:164.6px" width="9.4" height="10.4" viewBox="0 0 9.6 11"><path d="M0.3 2H9.3 M3.2 2V0.6H6.4V2 M1.2 2V9.6Q1.2 10.5 2.1 10.5H7.5Q8.4 10.5 8.4 9.6V2 M3.4 3.8V8.6 M4.8 3.8V8.6 M6.2 3.8V8.6" fill="none" stroke="#f0776b" stroke-width=".9"/></svg>
  <div class="gbtn" style="left:123.9px;top:190.4px;width:159.3px;height:17.4px;font-size:9.4px;line-height:17px">+ 增加计算列</div>

  <!-- tree -->
  <div class="abs" style="left:309.2px;top:52px;width:0;height:96px;border-left:1px dotted #cfcfcf"></div>
<div class="tr" style="top:41.5px"><svg width="24" height="11" viewBox="0 0 24 11"><path d="M8.4 5.5H12" stroke="#cfcfcf" stroke-width="1" stroke-dasharray="1 1"/><rect x="0.9" y="1.9" width="7" height="7" rx=".8" fill="#f2f5f9" stroke="#b4c4d3" stroke-width=".9"/><path d="M2.9 5.4H5.9M4.4 3.9V6.9" stroke="#111" stroke-width="1.1"/><rect x="12.9" y="0.6" width="9.6" height="9.6" rx=".9" fill="#fdf6ea" stroke="#e8a857" stroke-width="1"/><path d="M14.4 3.4H21M14.4 5.5H21M14.4 7.6H21" stroke="#eab676" stroke-width=".9"/></svg><span>客户表</span></div>
<div class="tr" style="top:55.7px"><svg width="24" height="11" viewBox="0 0 24 11"><path d="M8.4 5.5H12" stroke="#cfcfcf" stroke-width="1" stroke-dasharray="1 1"/><rect x="0.9" y="1.9" width="7" height="7" rx=".8" fill="#f2f5f9" stroke="#b4c4d3" stroke-width=".9"/><path d="M2.9 5.4H5.9M4.4 3.9V6.9" stroke="#111" stroke-width="1.1"/><rect x="12.9" y="0.6" width="9.6" height="9.6" rx=".9" fill="#fdf6ea" stroke="#e8a857" stroke-width="1"/><path d="M14.4 3.4H21M14.4 5.5H21M14.4 7.6H21" stroke="#eab676" stroke-width=".9"/></svg><span>订单明细表</span></div>
<div class="tr" style="top:69.9px"><svg width="24" height="11" viewBox="0 0 24 11"><path d="M8.4 5.5H12" stroke="#cfcfcf" stroke-width="1" stroke-dasharray="1 1"/><rect x="0.9" y="1.9" width="7" height="7" rx=".8" fill="#f2f5f9" stroke="#b4c4d3" stroke-width=".9"/><path d="M2.9 5.4H5.9M4.4 3.9V6.9" stroke="#111" stroke-width="1.1"/><rect x="12.9" y="0.6" width="9.6" height="9.6" rx=".9" fill="#fdf6ea" stroke="#e8a857" stroke-width="1"/><path d="M14.4 3.4H21M14.4 5.5H21M14.4 7.6H21" stroke="#eab676" stroke-width=".9"/></svg><span>国家表</span></div>
<div class="tr" style="top:84.1px"><svg width="24" height="11" viewBox="0 0 24 11"><path d="M8.4 5.5H12" stroke="#cfcfcf" stroke-width="1" stroke-dasharray="1 1"/><rect x="0.9" y="1.9" width="7" height="7" rx=".8" fill="#f2f5f9" stroke="#b4c4d3" stroke-width=".9"/><path d="M2.9 5.4H5.9M4.4 3.9V6.9" stroke="#111" stroke-width="1.1"/><rect x="12.9" y="0.6" width="9.6" height="9.6" rx=".9" fill="#fdf6ea" stroke="#e8a857" stroke-width="1"/><path d="M14.4 3.4H21M14.4 5.5H21M14.4 7.6H21" stroke="#eab676" stroke-width=".9"/></svg><span>订单表</span></div>
<div class="tr" style="top:98.3px"><svg width="24" height="11" viewBox="0 0 24 11"><path d="M8.4 5.5H12" stroke="#cfcfcf" stroke-width="1" stroke-dasharray="1 1"/><rect x="0.9" y="1.9" width="7" height="7" rx=".8" fill="#f2f5f9" stroke="#b4c4d3" stroke-width=".9"/><path d="M2.9 5.4H5.9M4.4 3.9V6.9" stroke="#111" stroke-width="1.1"/><rect x="12.9" y="0.6" width="9.6" height="9.6" rx=".9" fill="#fdf6ea" stroke="#e8a857" stroke-width="1"/><path d="M14.4 3.4H21M14.4 5.5H21M14.4 7.6H21" stroke="#eab676" stroke-width=".9"/></svg><span>零部件表</span></div>
<div class="tr" style="top:112.5px"><svg width="24" height="11" viewBox="0 0 24 11"><path d="M8.4 5.5H12" stroke="#cfcfcf" stroke-width="1" stroke-dasharray="1 1"/><rect x="0.9" y="1.9" width="7" height="7" rx=".8" fill="#f2f5f9" stroke="#b4c4d3" stroke-width=".9"/><path d="M2.9 5.4H5.9M4.4 3.9V6.9" stroke="#111" stroke-width="1.1"/><rect x="12.9" y="0.6" width="9.6" height="9.6" rx=".9" fill="#fdf6ea" stroke="#e8a857" stroke-width="1"/><path d="M14.4 3.4H21M14.4 5.5H21M14.4 7.6H21" stroke="#eab676" stroke-width=".9"/></svg><span>零部件供应表</span></div>
<div class="tr" style="top:126.7px"><svg width="24" height="11" viewBox="0 0 24 11"><path d="M8.4 5.5H12" stroke="#cfcfcf" stroke-width="1" stroke-dasharray="1 1"/><rect x="0.9" y="1.9" width="7" height="7" rx=".8" fill="#f2f5f9" stroke="#b4c4d3" stroke-width=".9"/><path d="M2.9 5.4H5.9M4.4 3.9V6.9" stroke="#111" stroke-width="1.1"/><rect x="12.9" y="0.6" width="9.6" height="9.6" rx=".9" fill="#fdf6ea" stroke="#e8a857" stroke-width="1"/><path d="M14.4 3.4H21M14.4 5.5H21M14.4 7.6H21" stroke="#eab676" stroke-width=".9"/></svg><span>区域表</span></div>
<div class="tr" style="top:140.9px"><svg width="24" height="11" viewBox="0 0 24 11"><path d="M8.4 5.5H12" stroke="#cfcfcf" stroke-width="1" stroke-dasharray="1 1"/><rect x="0.9" y="1.9" width="7" height="7" rx=".8" fill="#f2f5f9" stroke="#b4c4d3" stroke-width=".9"/><path d="M2.9 5.4H5.9M4.4 3.9V6.9" stroke="#111" stroke-width="1.1"/><rect x="12.9" y="0.6" width="9.6" height="9.6" rx=".9" fill="#fdf6ea" stroke="#e8a857" stroke-width="1"/><path d="M14.4 3.4H21M14.4 5.5H21M14.4 7.6H21" stroke="#eab676" stroke-width=".9"/></svg><span>供应商表</span></div>

  <!-- report list -->
  <div id="rl" class="abs">
    <div class="abs" style="left:4.3px;top:7.2px;font-size:9.3px;line-height:14px;font-weight:500;color:#222;font-family:'Noto Sans CJK SC','Liberation Sans',sans-serif">报表列表</div>
    <div class="gbtn" style="left:228.1px;top:6.8px;width:46px;height:15.8px;font-size:9.5px;line-height:15.4px;font-weight:500">添加报表</div>
    <div class="rrow" style="top:27px;background:#f2f2f2">
      <svg class="abs" style="left:3.9px;top:3.6px" width="12.6" height="12.2" viewBox="0 0 12.6 12.2"><rect x="0" y="5.6" width="9.2" height="6.6" rx="1" fill="#1f9a3c"/><path d="M6.4 5.8V3.4A2.4 2.4 0 0 1 11.2 3.4V4.6" fill="none" stroke="#1f9a3c" stroke-width="1.5"/></svg>
      <span>各区域各国订单年月汇总 - 多级交叉</span>
      <svg class="abs" style="left:244.4px;top:4px" width="12.4" height="11.8" viewBox="0 0 12.4 11.8"><path d="M6.9 3H0.6V8.6H6.9 M9.5 3H11.6V8.6H9.5 M2.6 5.8H6 M8.2 0.6V11.2 M6 0.6H10.4 M6 11.2H10.4" fill="none" stroke="#50505a" stroke-width="1.15"/></svg>
      <svg class="abs" style="left:264.6px;top:4px" width="11.2" height="11.4" viewBox="0 0 9.6 11" preserveAspectRatio="none"><path d="M0.3 2H9.3 M3.2 2V0.6H6.4V2 M1.2 2V9.6Q1.2 10.5 2.1 10.5H7.5Q8.4 10.5 8.4 9.6V2 M3.4 3.8V8.6 M4.8 3.8V8.6 M6.2 3.8V8.6" fill="#fbd5d0" stroke="#f0776b" stroke-width=".9"/></svg>
    </div>
    <div class="rrow" style="top:46.8px">
      <svg class="abs" style="left:5.3px;top:3.4px" width="10" height="11.8" viewBox="0 0 10 11.8"><rect x="0" y="5.2" width="10" height="6.6" rx="1" fill="#e0281c"/><path d="M2.4 5.4V3.4A2.6 2.6 0 0 1 7.6 3.4V5.4" fill="none" stroke="#e0281c" stroke-width="1.5"/></svg>
      <span>各国订单年汇总 - 交叉</span>
      <svg class="abs" style="left:244.4px;top:4px" width="12.4" height="11.8" viewBox="0 0 12.4 11.8"><path d="M6.9 3H0.6V8.6H6.9 M9.5 3H11.6V8.6H9.5 M2.6 5.8H6 M8.2 0.6V11.2 M6 0.6H10.4 M6 11.2H10.4" fill="none" stroke="#50505a" stroke-width="1.15"/></svg>
      <svg class="abs" style="left:264.6px;top:4px" width="11.2" height="11.4" viewBox="0 0 9.6 11" preserveAspectRatio="none"><path d="M0.3 2H9.3 M3.2 2V0.6H6.4V2 M1.2 2V9.6Q1.2 10.5 2.1 10.5H7.5Q8.4 10.5 8.4 9.6V2 M3.4 3.8V8.6 M4.8 3.8V8.6 M6.2 3.8V8.6" fill="#fbd5d0" stroke="#f0776b" stroke-width=".9"/></svg>
    </div>
    <div class="abs" style="left:284.2px;top:27.4px;width:1.6px;height:40.4px;background:#7a7a7a"></div>
  </div>
</div></div>
</body>
</html>
